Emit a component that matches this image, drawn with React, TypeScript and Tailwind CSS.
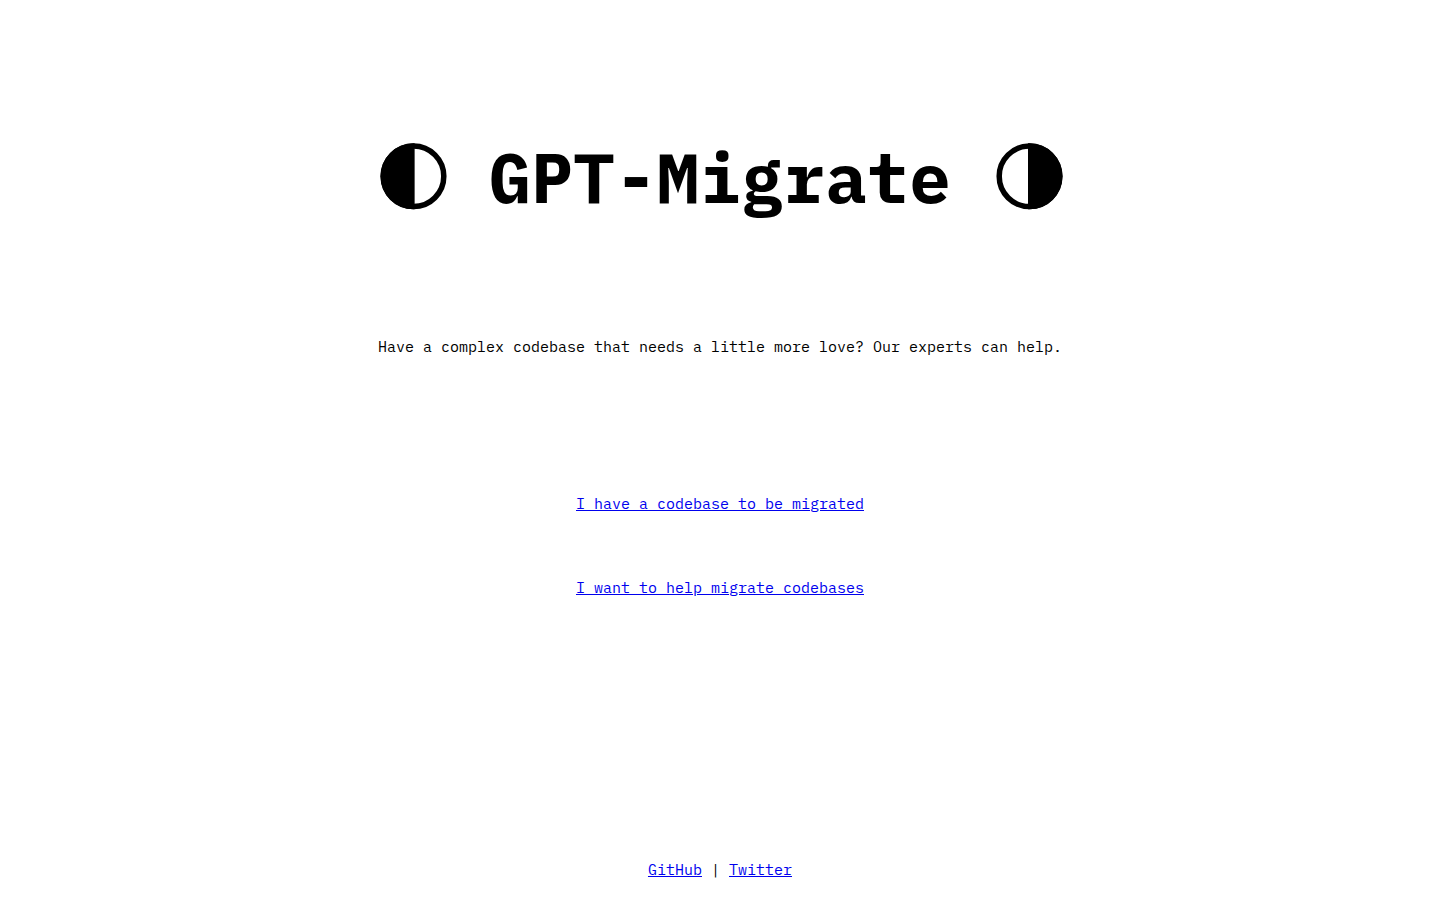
type HalfCircleProps = { filled: "left" | "right" };

function HalfCircle({ filled }: HalfCircleProps) {
  return (
    <svg viewBox="0 0 70 70" className="size-[70px] shrink-0" aria-hidden="true">
      <circle cx="36.5" cy="35.3" r="30.3" fill="none" stroke="black" strokeWidth="5.5" />
      {filled === "left" ? (
        <path d="M37.6 2.3H36.5A33 33 0 0 0 36.5 68.3H37.6Z" />
      ) : (
        <path d="M35 2.3H36.5A33 33 0 0 1 36.5 68.3H35Z" />
      )}
    </svg>
  );
}

type TextLinkProps = { href: string; children: string };

function TextLink({ href, children }: TextLinkProps) {
  return (
    <a href={href} className="text-[#0000ee] underline">
      {children}
    </a>
  );
}

export default function App() {
  return (
    <div className="flex min-h-screen flex-col items-center bg-white px-5 pt-[141px] pb-5 text-center font-['IBM_Plex_Mono','Liberation_Mono',monospace] text-[15px] leading-5 text-black">
      <main className="flex flex-1 flex-col items-center">
        <header className="flex items-start justify-center gap-[42px]">
          <HalfCircle filled="left" />
          <h1 className="text-[70px] leading-[72px] font-bold whitespace-nowrap">GPT-Migrate</h1>
          <HalfCircle filled="right" />
        </header>
        <p className="mt-[124px]">
          Have a complex codebase that needs a little more love? Our experts can help.
        </p>
        <nav className="mt-[137px] flex flex-col items-center gap-16">
          <TextLink href="#migrate">I have a codebase to be migrated</TextLink>
          <TextLink href="#help">I want to help migrate codebases</TextLink>
        </nav>
      </main>
      <footer>
        <TextLink href="#github">GitHub</TextLink> | <TextLink href="#twitter">Twitter</TextLink>
      </footer>
    </div>
  );
}
